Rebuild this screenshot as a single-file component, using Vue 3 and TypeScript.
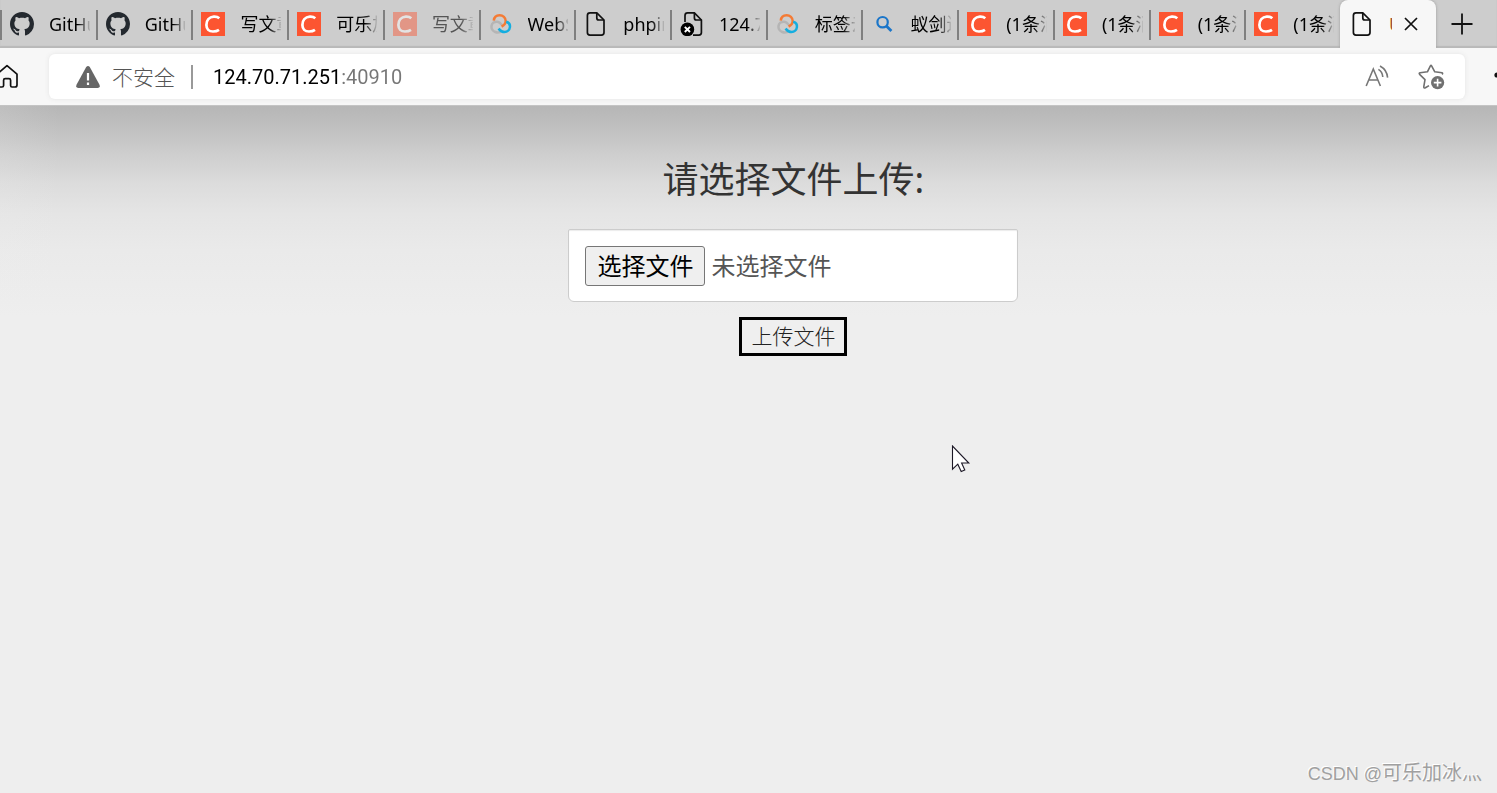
<script setup lang="ts">
import { ref } from 'vue'

type IconName = 'github' | 'csdn' | 'cloud' | 'page' | 'blocked' | 'search'

interface Tab {
  id: number
  icon: IconName
  title: string
  asleep?: boolean
}

const tabs: Tab[] = [
  { id: 1, icon: 'github', title: 'GitHub' },
  { id: 2, icon: 'github', title: 'GitHub' },
  { id: 3, icon: 'csdn', title: '写文章' },
  { id: 4, icon: 'csdn', title: '可乐加冰' },
  { id: 5, icon: 'csdn', title: '写文章', asleep: true },
  { id: 6, icon: 'cloud', title: 'WebShell' },
  { id: 7, icon: 'page', title: 'phpinfo' },
  { id: 8, icon: 'blocked', title: '124.70' },
  { id: 9, icon: 'cloud', title: '标签云' },
  { id: 10, icon: 'search', title: '蚁剑连接' },
  { id: 11, icon: 'csdn', title: '(1条消息)' },
  { id: 12, icon: 'csdn', title: '(1条消息)' },
  { id: 13, icon: 'csdn', title: '(1条消息)' },
  { id: 14, icon: 'csdn', title: '(1条消息)' },
]

const address = ref('124.70.71.251:40910')
const fileName = ref('未选择文件')

function onPick(event: Event) {
  const files = (event.target as HTMLInputElement).files
  fileName.value = files && files.length ? files[0].name : '未选择文件'
}
</script>

<template>
  <div class="browser">
    <nav class="tab-strip" aria-label="标签页">
      <button v-for="tab in tabs" :key="tab.id" type="button" class="tab" :class="{ asleep: tab.asleep }">
        <svg v-if="tab.icon === 'github'" class="tab-icon" viewBox="0 0 16 16" fill="#24292f">
          <path d="M8 0C3.58 0 0 3.58 0 8c0 3.54 2.29 6.53 5.47 7.59.4.07.55-.17.55-.38 0-.19-.01-.82-.01-1.49-2.01.37-2.53-.49-2.69-.94-.09-.23-.48-.94-.82-1.13-.28-.15-.68-.52-.01-.53.63-.01 1.08.58 1.23.82.72 1.21 1.87.87 2.33.66.07-.52.28-.87.51-1.07-1.78-.2-3.64-.89-3.64-3.95 0-.87.31-1.59.82-2.15-.08-.2-.36-1.02.08-2.12 0 0 .67-.21 2.2.82.64-.18 1.32-.27 2-.27s1.36.09 2 .27c1.53-1.04 2.2-.82 2.2-.82.44 1.1.16 1.92.08 2.12.51.56.82 1.27.82 2.15 0 3.07-1.87 3.75-3.65 3.95.29.25.54.73.54 1.48 0 1.07-.01 1.93-.01 2.2 0 .21.15.46.55.38A8.01 8.01 0 0 0 16 8c0-4.42-3.58-8-8-8z" />
        </svg>
        <svg v-else-if="tab.icon === 'csdn'" class="tab-icon" viewBox="0 0 24 24" fill="none">
          <rect width="24" height="24" fill="#fc5531" />
          <path d="M18.3 6.2C16.8 4.9 14.8 4.5 12.8 4.6C8.2 4.9 5.4 8.4 5.4 12.9C5.4 17 8 19.5 12 19.5C14.2 19.5 16.4 19 18 17.9" stroke="#fff" stroke-width="2.7" />
        </svg>
        <svg v-else-if="tab.icon === 'cloud'" class="tab-icon" viewBox="0 0 24 24" fill="none" stroke-width="2.5">
          <path d="M13.5 18.3C11.5 20.2 8.7 21 6.3 20C3.5 18.9 2.2 16.5 2.5 14C2.9 11 5.7 9.2 8.6 9.8C10.8 10.2 12 12 13.4 13.5" stroke="#b5b5b5" />
          <path d="M4.8 8.6C5.1 5.1 7.6 3.2 10.6 3.2C14 3.2 16.7 5.7 16.7 9C16.7 11.5 15.2 13.2 12.6 14.6" stroke="#f47b35" />
          <path d="M17.2 9.7C19.7 10.4 21.3 12.5 20.9 15.2C20.6 18 18.3 20.1 15.5 20.1C13.2 20.1 11.6 19.1 9.5 16.6" stroke="#14aee0" />
        </svg>
        <svg v-else-if="tab.icon === 'page'" class="tab-icon" viewBox="0 0 24 24" fill="none" stroke="#111" stroke-width="1.7">
          <path d="M6 .9H12.8L20 8V20.5Q20 23.1 17.4 23.1H6Q3.4 23.1 3.4 20.5V3.5Q3.4 .9 6 .9Z" />
          <path d="M12.8 1V6Q12.8 8 14.8 8H20" />
        </svg>
        <svg v-else-if="tab.icon === 'blocked'" class="tab-icon" viewBox="0 0 24 24" fill="none" stroke="#111" stroke-width="1.7">
          <path d="M5 10V3.5Q5 .9 7.6 .9H14.4L21.4 8V20.5Q21.4 23.1 18.8 23.1H13" />
          <path d="M14.4 1V6Q14.4 8 16.4 8H21.4" />
          <circle cx="7.4" cy="17.4" r="6.8" fill="#000" stroke="none" />
          <path d="M4.8 14.8L10 20M10 14.8L4.8 20" stroke="#fff" stroke-width="1.9" />
        </svg>
        <svg v-else class="tab-icon" viewBox="0 0 24 24" fill="none" stroke="#1b76c9">
          <circle cx="11.6" cy="10.2" r="5.2" stroke-width="2.2" />
          <path d="M15.4 14L20.4 19" stroke-width="2.8" />
        </svg>
        <span class="tab-title">{{ tab.title }}</span>
      </button>

      <div class="tab-active">
        <svg class="tab-icon" viewBox="0 0 24 24" fill="none" stroke="#111" stroke-width="1.7">
          <path d="M6 .9H12.8L20 8V20.5Q20 23.1 17.4 23.1H6Q3.4 23.1 3.4 20.5V3.5Q3.4 .9 6 .9Z" />
          <path d="M12.8 1V6Q12.8 8 14.8 8H20" />
        </svg>
        <span class="active-title">Upload</span>
        <button type="button" class="icon-button close" aria-label="关闭标签页">
          <svg width="14" height="14" viewBox="0 0 14 14" stroke="#111" stroke-width="1.7"><path d="M1 1L13 13M13 1L1 13" /></svg>
        </button>
      </div>

      <button type="button" class="icon-button new-tab" aria-label="新建标签页">
        <svg width="22" height="22" viewBox="0 0 22 22" stroke="#111" stroke-width="1.8"><path d="M11 .5V21.5M.5 11H21.5" /></svg>
      </button>
    </nav>

    <header class="toolbar">
      <button type="button" class="icon-button home" aria-label="主页">
        <svg width="24" height="26" viewBox="0 0 24 26" fill="none" stroke="#111" stroke-width="1.7" stroke-linejoin="round">
          <path d="M2 10.2L12 1.6L22 10.2V21Q22 23 20 23H17Q15.6 23 15.6 21.5V16.2Q15.6 14.6 14 14.6H10.2Q8.6 14.6 8.6 16.2V21.5Q8.6 23 7 23H4Q2 23 2 21Z" />
        </svg>
      </button>
      <div class="address-bar">
        <svg class="warning" width="24" height="22" viewBox="0 0 24 22">
          <path d="M10.2 1.1Q12 -1 13.8 1.1L23.5 18.8Q24.5 22 21.6 22H2.4Q-.5 22 .5 18.8Z" fill="#666" />
          <path d="M12 7V14.5M12 16.5V19" stroke="#fff" stroke-width="2.2" />
        </svg>
        <span class="insecure">不安全</span>
        <span class="divider"></span>
        <input v-model="address" class="url" type="text" aria-label="地址" spellcheck="false" />
        <button type="button" class="icon-button" aria-label="朗读此页">
          <svg width="24" height="24" viewBox="0 0 24 24" fill="none" stroke="#777" stroke-width="1.6">
            <path d="M1.2 21L8.3 4L15.4 21M3.8 15H12.8" />
            <path d="M13.4 4.4Q17.4 6.6 17.8 12M15 1Q22 4.8 22.6 12.6" />
          </svg>
        </button>
        <button type="button" class="icon-button favorite" aria-label="添加到收藏夹">
          <svg width="28" height="26" viewBox="0 0 28 26" fill="none" stroke="#707070" stroke-width="1.6" stroke-linejoin="round">
            <path d="M12 21.6L8.4 23.8Q6.6 24.6 6.8 22.6L8 15.6L2.6 10.4Q1.6 9 3.2 8.8L10.4 7.8L13.4 1.8Q14 .8 14.6 1.8L17.8 7.8L25 8.8Q26.2 9.2 25 10.4" />
            <circle cx="20.6" cy="18.6" r="6.6" fill="#707070" stroke="none" />
            <path d="M20.6 14.8V22.4M16.8 18.6H24.4" stroke="#fff" />
          </svg>
        </button>
      </div>
      <button type="button" class="icon-button extensions" aria-label="扩展">
        <svg width="12" height="12" viewBox="0 0 12 12"><circle cx="6" cy="6" r="2.6" fill="#111" /></svg>
      </button>
    </header>

    <main class="page">
      <form class="upload" @submit.prevent>
        <h1>请选择文件上传:</h1>
        <label class="file-field">
          <input class="file-input" type="file" @change="onPick" />
          <span class="file-button">选择文件</span>
          <span class="file-name">{{ fileName }}</span>
        </label>
        <button class="submit" type="submit">上传文件</button>
      </form>
      <span class="watermark"><span class="site">CSDN @</span>可乐加冰灬</span>
      <svg class="pointer" width="20" height="30" viewBox="0 0 20 30">
        <path d="M1.5 1V24.2L6.8 19.2L10.2 26.5L13.8 25L10.6 18H17.8Z" fill="#fff" stroke="#1c1826" stroke-width="1.1" />
      </svg>
    </main>
  </div>
</template>

<style>
body {
  margin: 0;
  background: #eee;
}
</style>

<style scoped>
* {
  box-sizing: border-box;
}

.browser {
  display: flex;
  flex-direction: column;
  min-height: 100vh;
  overflow: hidden;
  font-family: "Noto Sans", "Noto Sans CJK SC", sans-serif;
  color: #111;
}

button {
  font-family: inherit;
  cursor: default;
}

.tab-strip {
  display: flex;
  height: 48px;
  background: #cdcdcd;
  box-shadow: inset 0 -2px 1px #b9b9b9;
}

.tab {
  display: flex;
  align-items: center;
  flex: 1 1 0;
  min-width: 0;
  padding: 0 6px 0 10px;
  gap: 15px;
  border: 0;
  background: linear-gradient(#808080, #808080) 0 10px / 2px 30px no-repeat;
}

.tab-icon {
  flex: none;
  width: 24px;
  height: 24px;
}

.tab-title {
  flex: 1;
  min-width: 0;
  overflow: hidden;
  white-space: nowrap;
  text-align: left;
  font-size: 18px;
  line-height: 26px;
  color: #000;
  mask-image: linear-gradient(90deg, #000 70%, rgba(0, 0, 0, 0.1));
}

.asleep .tab-icon {
  opacity: 0.45;
}

.asleep .tab-title {
  color: #555;
}

.tab-active {
  display: flex;
  align-items: center;
  flex: 0 0 96px;
  padding: 0 18px 0 10px;
  border-radius: 8px 8px 0 0;
  background: #f7f7f7;
  box-shadow: 0 0 3px #999;
  clip-path: inset(0 -4px);
}

.active-title {
  width: 3px;
  margin-left: 15px;
  overflow: hidden;
  font-size: 18px;
  line-height: 26px;
  color: #a0522d;
}

.icon-button {
  display: flex;
  align-items: center;
  justify-content: center;
  flex: none;
  padding: 0;
  border: 0;
  background: none;
}

.close {
  margin-left: auto;
}

.new-tab {
  width: 61px;
  padding-right: 10px;
}

.toolbar {
  display: flex;
  align-items: center;
  height: 58px;
  background: #f7f7f7;
  border-bottom: 1px solid #c4c4c4;
  overflow: hidden;
}

.home {
  margin-left: -5px;
  margin-right: 30px;
}

.address-bar {
  display: flex;
  align-items: center;
  flex: 1;
  min-width: 0;
  height: 45px;
  padding: 0 20px 0 27px;
  border-radius: 6px;
  background: #fff;
  box-shadow: 0 0 5px #e4e4e4;
}

.insecure {
  margin-left: 12px;
  font-size: 21px;
  font-weight: 300;
  line-height: 30px;
  color: #555;
}

.divider {
  width: 2px;
  height: 24px;
  margin: 0 20px 0 16px;
  background: #999;
}

.url {
  flex: 1;
  min-width: 0;
  height: 30px;
  padding: 0;
  border: 0;
  outline: 0;
  font-family: Roboto, "Noto Sans CJK SC", sans-serif;
  font-size: 20px;
  color: transparent;
  background: linear-gradient(90deg, #000 128px, #767676 128px);
  background-clip: text;
  -webkit-background-clip: text;
}

.favorite {
  margin-left: 28px;
}

.extensions {
  margin: 0 -6px 4px 26px;
}

.page {
  position: relative;
  flex: 1;
  padding: 47px 0 40px 6%;
  background:
    linear-gradient(90deg, rgba(238, 238, 238, 0.15), rgba(238, 238, 238, 0) 60px),
    linear-gradient(#b6b6b6, #c1c1c1 24px, #cecece 48px, #dcdcdc 78px, #e5e5e5 108px, #eaeaea 145px, #eee 210px);
}

.upload {
  display: flex;
  flex-direction: column;
  align-items: center;
}

h1 {
  margin: 0 0 23px;
  font-size: 36px;
  font-weight: 400;
  line-height: 53px;
  color: #333;
}

.file-field {
  position: relative;
  display: flex;
  align-items: center;
  gap: 6px;
  width: 100%;
  max-width: 450px;
  min-height: 73px;
  padding: 0 16px;
  border: 1px solid #ccc;
  border-radius: 2px 2px 6px 6px;
  background: #fff;
  box-shadow: inset 0 1px 1px #ececec;
  font-size: 24px;
  line-height: 34px;
  color: #555;
}

.file-input {
  position: absolute;
  inset: 0;
  width: 100%;
  opacity: 0;
}

.file-button {
  padding: 2px 11px;
  border: 1px solid #767676;
  border-radius: 3px;
  background: #efefef;
  color: #000;
}

.submit {
  margin-top: 15px;
  padding: 1px 9px;
  border: 3px solid #000;
  background: #efefef;
  font-size: 21px;
  font-weight: 300;
  line-height: 31px;
  color: #222;
}

.pointer {
  position: absolute;
  left: 951px;
  top: 339px;
}

.watermark {
  position: absolute;
  right: 15px;
  bottom: 5px;
  font-family: "Liberation Sans", "Noto Sans CJK SC", sans-serif;
  font-size: 20px;
  line-height: 28px;
  color: #a0a0a0;
  text-shadow: -1px -1px 0 #fff;
}

.site {
  font-size: 18px;
}
</style>
